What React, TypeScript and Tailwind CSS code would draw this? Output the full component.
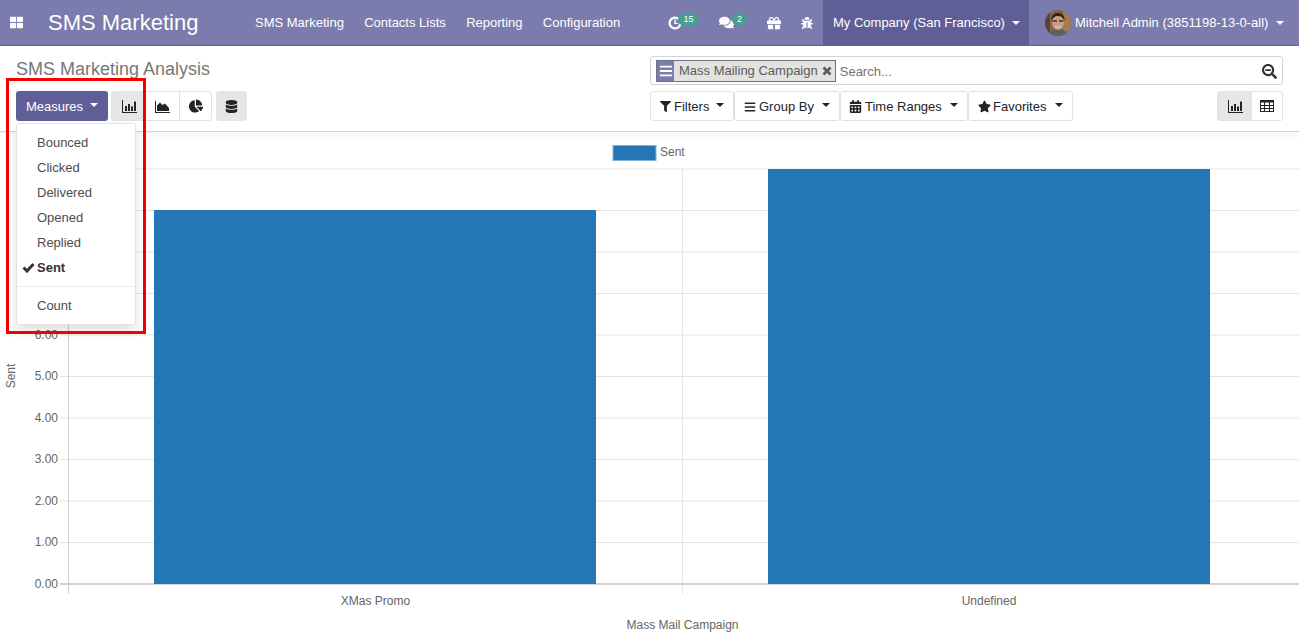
import {
  FaBars,
  FaBug,
  FaCalendarAlt,
  FaChartPie,
  FaComments,
  FaDatabase,
  FaFilter,
  FaGift,
  FaSearchMinus,
  FaStar,
  FaThLarge,
} from "react-icons/fa";

const font = { fontFamily: '"Liberation Sans", Arial, sans-serif' };

const Caret = ({ className = "" }: { className?: string }) => (
  <span
    className={`inline-block w-0 h-0 border-x-[4px] border-x-transparent border-t-[4px] border-t-current ${className}`}
  />
);

function ActivityIcon() {
  return (
    <svg width="14" height="14" viewBox="0 0 14 14" fill="none" stroke="white">
      <path d="M10.8 3.2A5.4 5.4 0 1 0 12.4 7" strokeWidth="2.2" />
      <path d="M7 3.6V7.4H9.8" strokeWidth="1.4" />
    </svg>
  );
}

function BarIcon() {
  return (
    <svg width="15" height="13" viewBox="0 0 15 13" fill="#212529">
      <path d="M0 0h1v12h15v1H0z" />
      <rect x="3" y="6" width="2" height="5" />
      <rect x="6" y="4" width="2" height="7" />
      <rect x="9" y="6.500" width="2" height="4.500" />
      <rect x="12" y="1.500" width="2" height="9.500" />
    </svg>
  );
}

function AreaIcon() {
  return (
    <svg width="15" height="13" viewBox="0 0 15 13" fill="#212529">
      <path d="M0 1h1v11h14v1H0z" />
      <path d="M2 11V5.500L5 2.500 7.500 5 10 3.500 14 8v3z" />
    </svg>
  );
}

function TableIcon() {
  return (
    <svg width="14" height="12" viewBox="0 0 14 12" fill="none" stroke="#212529">
      <rect x="0.500" y="0.500" width="13" height="11" />
      <path d="M0 1.500h14" strokeWidth="2" />
      <path d="M0 5.500h14M0 8.500h14M4.500 2v10M9.500 2v10" />
    </svg>
  );
}

function CheckIcon({ className = "" }: { className?: string }) {
  return (
    <svg width="13" height="11" viewBox="0 0 13 11" fill="none" stroke="#333" strokeWidth="3" className={className}>
      <path d="M1.500 5.500L5 9 11.500 2" />
    </svg>
  );
}

function CloseIcon() {
  return (
    <svg width="10" height="10" viewBox="0 0 10 10" fill="none" stroke="#5c5c5c" strokeWidth="2.800">
      <path d="M1.500 1.500l7 7M8.500 1.500l-7 7" />
    </svg>
  );
}

function Avatar() {
  return (
    <svg width="26" height="26" viewBox="0 0 26 26" className="rounded-full">
      <rect width="26" height="26" fill="#8a6445" />
      <rect x="18" width="8" height="26" fill="#a77a50" />
      <rect width="5" height="26" fill="#54463c" />
      <path d="M3 26c1-5 5-7 10-7s9 2 10 7z" fill="#5d5f60" />
      <ellipse cx="13" cy="12.500" rx="6" ry="7.500" fill="#c79c83" />
      <path d="M6.500 11C6 4 10 3 13 3s7 1 6.500 8c-1-3-3-5-6.500-5s-5.500 2-6.500 5z" fill="#2f2621" />
      <path d="M7.500 11h4.500M14 11h4.500" stroke="#3a3532" strokeWidth="1.500" />
      <path d="M10 16.500c2 1 4 1 6 0" stroke="#e6dcd3" strokeWidth="1" fill="none" />
    </svg>
  );
}

function Navbar() {
  return (
    <header className="flex items-stretch h-[46px] bg-[#7c7bad] border-b border-[#5f5e97] text-white shrink-0">
      <div className="flex items-center pl-[10px] w-[48px]">
        <FaThLarge className="text-[13px]" />
      </div>
      <div className="flex items-center text-[22px] w-[207px]">SMS Marketing</div>
      <nav className="flex items-center gap-[20.3px] text-[13px] w-[397px] whitespace-nowrap">
        <span>SMS Marketing</span>
        <span>Contacts Lists</span>
        <span>Reporting</span>
        <span>Configuration</span>
      </nav>
      <div className="flex items-center pl-[16px] w-[171px]">
        <span className="relative flex items-center w-[51px]">
          <ActivityIcon />
          <span className="absolute left-[10px] top-[-3px] h-[13px] w-[21px] rounded-full bg-[#46a08f] text-[9px] leading-[13px] text-center">
            15
          </span>
        </span>
        <span className="relative flex items-center w-[48px]">
          <FaComments className="text-[15px]" />
          <span className="absolute left-[13px] top-[-2px] h-[13px] w-[15px] rounded-full bg-[#46a08f] text-[9px] leading-[13px] text-center">
            2
          </span>
        </span>
        <span className="w-[34px]">
          <FaGift className="text-[14px]" />
        </span>
        <FaBug className="text-[12px]" />
      </div>
      <div className="flex items-center gap-[7px] bg-[#5f5e97] px-[10px] w-[206px] text-[13px] whitespace-nowrap">
        My Company (San Francisco)
        <Caret />
      </div>
      <div className="flex items-center pl-[16px] text-[13px] whitespace-nowrap">
        <Avatar />
        <span className="ml-[4px]">Mitchell Admin (3851198-13-0-all)</span>
        <Caret className="ml-[8px]" />
      </div>
    </header>
  );
}

function PlainButton({ icon, label, width }: { icon: React.ReactNode; label: string; width: string }) {
  return (
    <button
      className={`flex items-center justify-between h-[30px] bg-white border border-[#dee2e6] rounded-[3px] px-[9px] pt-[1px] text-[13px] text-[#212529] ${width}`}
    >
      <span className="flex items-center gap-[3px]">
        {icon}
        {label}
      </span>
      <Caret className="mb-[3px]" />
    </button>
  );
}

function ControlPanel() {
  return (
    <section className="flex h-[86px] shrink-0 bg-white border-b border-[#ced4da] px-[16px] text-[#212529]">
      <div className="w-[634px]">
        <h1 className="mt-[11px] h-[24px] text-[18px] leading-[24px] text-[#777]">SMS Marketing Analysis</h1>
        <div className="flex mt-[10px]">
          <button className="flex items-center h-[30px] w-[92px] pl-[10px] pt-[1px] bg-[#5f5e97] rounded-[3px] text-[13px] text-white">
            Measures
            <Caret className="ml-[7px] mb-[3px]" />
          </button>
          <div className="flex ml-[3px] h-[30px] w-[101px] border border-[#dee2e6] rounded-[3px] text-[13px]">
            <span className="flex items-center justify-center w-[34px] bg-[#e6e6e6]">
              <BarIcon />
            </span>
            <span className="flex items-center justify-center w-[34px] border-r border-[#dee2e6]">
              <AreaIcon />
            </span>
            <span className="flex items-center justify-center flex-1">
              <FaChartPie className="text-[14px]" />
            </span>
          </div>
          <span className="flex items-center justify-center ml-[4px] h-[30px] w-[31px] rounded-[3px] bg-[#e6e6e6] text-[13px]">
            <FaDatabase />
          </span>
        </div>
      </div>
      <div className="flex-1">
        <div className="flex items-center mt-[10px] h-[29px] border border-[#ced4da] rounded-[3px] px-[5px]">
          <span className="flex items-stretch h-[22px] border border-[#6c757d] bg-[#e2e2e0] text-[13px] text-[#5c5c5c]">
            <span className="flex items-center justify-center w-[17px] bg-[#7c7bad] text-white text-[14px]">
              <FaBars />
            </span>
            <span className="flex items-center pl-[5px] pr-[4px]">Mass Mailing Campaign</span>
            <span className="flex items-center pr-[3px]">
              <CloseIcon />
            </span>
          </span>
          <span className="ml-[4px] flex-1 pt-[2px] text-[13px] text-[#737373]">Search...</span>
          <FaSearchMinus className="text-[15px] text-[#333] mt-[1px]" />
        </div>
        <div className="flex items-center justify-between mt-[6px]">
          <div className="flex">
            <PlainButton width="w-[84px]" icon={<FaFilter className="text-[11px]" />} label="Filters" />
            <PlainButton width="w-[106px]" icon={<FaBars className="text-[12px]" />} label="Group By" />
            <PlainButton width="w-[128px]" icon={<FaCalendarAlt className="text-[13px] -ml-[1px]" />} label="Time Ranges" />
            <PlainButton width="w-[105px]" icon={<FaStar className="text-[13px] -mr-[1px]" />} label="Favorites" />
          </div>
          <div className="flex h-[30px] w-[66px] border border-[#dee2e6] rounded-[3px] text-[13px]">
            <span className="flex items-center justify-center w-[34px] bg-[#e6e6e6]">
              <BarIcon />
            </span>
            <span className="flex items-center justify-center flex-1">
              <TableIcon />
            </span>
          </div>
        </div>
      </div>
    </section>
  );
}

const measures = ["Bounced", "Clicked", "Delivered", "Opened", "Replied"];

function MeasuresMenu() {
  return (
    <div className="absolute left-[16px] top-[123px] w-[120px] h-[202px] pt-[6px] bg-white border border-[#e3e3e3] rounded-[3px] shadow-[0_6px_12px_rgba(0,0,0,0.12)] text-[13px] text-[#4c4c4c]">
      {measures.map((m) => (
        <div key={m} className="h-[25px] leading-[25px] pl-[20px]">
          {m}
        </div>
      ))}
      <div className="relative h-[25px] leading-[25px] pl-[20px] font-bold text-[#333]">
        <CheckIcon className="absolute left-[5px] top-[7px]" />
        Sent
      </div>
      <div className="my-[6px] border-t border-[#e9ecef]" />
      <div className="h-[25px] leading-[25px] pl-[20px]">Count</div>
    </div>
  );
}

const ticks = [10, 9, 8, 7, 6, 5, 4, 3, 2, 1, 0];
const tickY = (v: number) => 584 - v * 41.5;

function Chart() {
  return (
    <main className="flex-1 bg-white">
      <div className="h-[5px] bg-[#f9f9f9]" />
      <svg width="1299" height="500" viewBox="0 137 1299 500" className="block" fontSize="12" fill="#666">
        {ticks.map((v) => (
          <g key={v}>
            <line x1="60" x2="1299" y1={tickY(v)} y2={tickY(v)} stroke={v === 0 ? "#a6a6a6" : "#e4e4e4"} />
            {v < 7 && (
              <text x="58" y={tickY(v) + 3.5} textAnchor="end">
                {v}.00
              </text>
            )}
          </g>
        ))}
        <line x1="68.500" x2="68.500" y1="169" y2="594" stroke="#cfcfcf" />
        <line x1="682.500" x2="682.500" y1="169" y2="594" stroke="#e4e4e4" />
        <rect x="154" y="210" width="442" height="374" fill="#2476b4" />
        <rect x="768" y="169" width="442" height="415" fill="#2476b4" />
        <rect x="613" y="145.500" width="43" height="15" fill="#2476b4" stroke="#7fb3d8" />
        <text x="660" y="156">Sent</text>
        <text x="375.500" y="605" textAnchor="middle">XMas Promo</text>
        <text x="989" y="605" textAnchor="middle">Undefined</text>
        <text x="682.500" y="629" textAnchor="middle">Mass Mail Campaign</text>
        <text transform="translate(15 376) rotate(-90)" textAnchor="middle">Sent</text>
      </svg>
    </main>
  );
}

export default function App() {
  return (
    <div className="relative flex flex-col h-screen overflow-hidden bg-white" style={font}>
      <Navbar />
      <ControlPanel />
      <Chart />
      <MeasuresMenu />
      {/* red highlight drawn on top of the screenshot */}
      <div className="absolute left-[6px] top-[78px] w-[140px] h-[256px] border-[3px] border-[#f00000]" />
    </div>
  );
}
